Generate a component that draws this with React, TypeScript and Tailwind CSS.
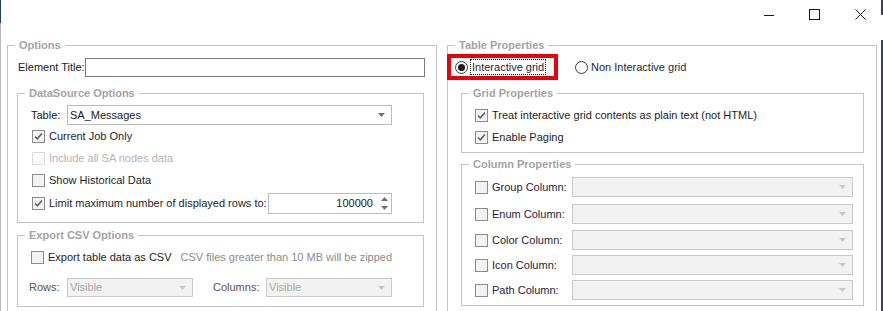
import React from "react";

function Group({
  title,
  className = "",
  children,
}: {
  title: string;
  className?: string;
  children?: React.ReactNode;
}) {
  return (
    <fieldset className={`border border-[#c4c4c4] min-w-0 ${className}`}>
      <legend className="ml-[7px] px-[4px] text-[11px] leading-[14px] font-bold text-[#a4a4a4]">
        {title}
      </legend>
      {children}
    </fieldset>
  );
}

function Check({ checked = false, disabled = false }: { checked?: boolean; disabled?: boolean }) {
  return (
    <span
      className={`w-[13px] h-[13px] border flex items-center justify-center shrink-0 ${
        disabled ? "border-[#dcdcdc] bg-[#fafafa]" : "border-[#8c8c8c] bg-[#f3f3f3]"
      }`}
    >
      {checked && (
        <svg width="11" height="11" viewBox="0 0 11 11">
          <path d="M2 5.5 L4.3 7.8 L9 2.5" fill="none" stroke="#606060" strokeWidth="1.6" />
        </svg>
      )}
    </span>
  );
}

function Arrow({ disabled = false }: { disabled?: boolean }) {
  return (
    <svg width="7" height="4" viewBox="0 0 7 4" className="shrink-0">
      <path d="M0 0 H7 L3.5 4 Z" fill={disabled ? "#c8c8c8" : "#707070"} />
    </svg>
  );
}

function Select({
  value = "",
  disabled = false,
  className = "",
}: {
  value?: string;
  disabled?: boolean;
  className?: string;
}) {
  return (
    <div
      className={`flex items-center border pl-[2px] pr-[6px] shrink-0 ${
        disabled ? "border-[#c9c9c9] bg-[#f2f2f2] text-[#a8a8a8]" : "border-[#bcbcbc] bg-white text-[#1a1a1a]"
      } ${className}`}
    >
      <span className="flex-1 truncate">{value}</span>
      <Arrow disabled={disabled} />
    </div>
  );
}

function CheckRow({
  label,
  checked = false,
  disabled = false,
  className = "",
}: {
  label: string;
  checked?: boolean;
  disabled?: boolean;
  className?: string;
}) {
  return (
    <div className={`flex items-center ${className}`}>
      <Check checked={checked} disabled={disabled} />
      <span className={`ml-[4px] ${disabled ? "text-[#b4b4b4]" : "text-[#1e1e1e]"}`}>{label}</span>
    </div>
  );
}

function ColumnRow({ label, className = "" }: { label: string; className?: string }) {
  return (
    <div className={`flex items-center h-[20px] ${className}`}>
      <Check />
      <span className="ml-[4px] w-[80px] text-[#1f2336]">{label}</span>
      <Select disabled className="w-[281px] h-[20px]" />
    </div>
  );
}

export default function App() {
  return (
    <div className="w-[883px] h-[311px] bg-white overflow-hidden flex whitespace-nowrap font-['Liberation_Sans',Arial,sans-serif] text-[11px] leading-[13px]">
      {/* left window edge */}
      <div className="w-[1px] flex flex-col shrink-0">
        <div className="h-[23px] bg-[#1f3d60]" />
        <div className="flex-1 bg-[#b8b8b8]" />
      </div>

      <div className="flex-1 flex flex-col min-w-0">
        {/* title bar */}
        <div className="h-[29px] flex items-center justify-end gap-[35px] pr-[15px] shrink-0">
          <svg width="10" height="10" viewBox="0 0 10 10">
            <path d="M0 5.5 H10" stroke="#1a1a1a" strokeWidth="1" />
          </svg>
          <svg width="11" height="11" viewBox="0 0 11 11">
            <rect x="0.5" y="0.5" width="10" height="10" fill="none" stroke="#1a1a1a" strokeWidth="1" />
          </svg>
          <svg width="11" height="11" viewBox="0 0 11 11">
            <path d="M0.5 0.5 L10.5 10.5 M10.5 0.5 L0.5 10.5" stroke="#1a1a1a" strokeWidth="1" />
          </svg>
        </div>

        {/* content */}
        <div className="flex gap-[10px] pl-[6px] pt-[9px]">
          {/* Left column */}
          <Group title="Options" className="w-[430px] h-[290px] shrink-0">
            <div className="pl-[9px] pr-[12px]">
              <div className="flex items-center mt-[6px] -mr-[1px]">
                <span className="text-[#1a1a1a] pl-[1px]">Element Title:</span>
                <div className="flex-1 h-[19px] border border-[#7a7a7a] bg-white" />
              </div>

              <Group title="DataSource Options" className="mt-[9px]">
                <div className="pl-[13px] pr-[31px] pb-[7px]">
                  <div className="flex items-center mt-[5px]">
                    <span className="w-[36px] text-[#1a1a1a]">Table:</span>
                    <Select value="SA_Messages" className="w-[325px] h-[20px]" />
                  </div>
                  <CheckRow label="Current Job Only" checked className="h-[22px] pl-[1px]" />
                  <CheckRow label="Include all SA nodes data" disabled className="h-[22px] pl-[1px]" />
                  <CheckRow label="Show Historical Data" className="h-[22px] pl-[1px]" />
                  <div className="flex items-center h-[24px] pl-[1px]">
                    <Check checked />
                    <span className="ml-[4px] text-[#1e1e1e] flex-1">Limit maximum number of displayed rows to:</span>
                    <div className="w-[124px] h-[21px] border border-[#bcbcbc] bg-white flex items-center justify-end pr-[3px] shrink-0">
                      <span className="text-[#1a1a1a] mr-[8px]">100000</span>
                      <div className="flex flex-col gap-[5px]">
                        <svg width="7" height="4" viewBox="0 0 7 4">
                          <path d="M0 4 H7 L3.5 0 Z" fill="#707070" />
                        </svg>
                        <svg width="7" height="4" viewBox="0 0 7 4">
                          <path d="M0 0 H7 L3.5 4 Z" fill="#707070" />
                        </svg>
                      </div>
                    </div>
                  </div>
                </div>
              </Group>

              <Group title="Export CSV Options" className="mt-[5px]">
                <div className="pl-[11px] pb-[9px]">
                  <div className="flex items-center h-[22px] mt-[4px] pl-[2px]">
                    <Check />
                    <span className="ml-[4px] text-[#1e1e1e]">Export table data as CSV</span>
                    <span className="ml-[9px] text-[#8c8c8c]">CSV files greater than 10 MB will be zipped</span>
                  </div>
                  <div className="flex items-center mt-[10px]">
                    <span className="w-[38px] text-[#555555]">Rows:</span>
                    <Select value="Visible" disabled className="w-[126px] h-[19px]" />
                    <span className="ml-[20px] w-[53px] text-[#555555]">Columns:</span>
                    <Select value="Visible" disabled className="w-[126px] h-[19px]" />
                  </div>
                </div>
              </Group>
            </div>
          </Group>

          {/* Right column */}
          <Group title="Table Properties" className="w-[430px] h-[290px] shrink-0">
            <div className="pr-[12px]">
              <div className="flex items-center mt-[2px]">
                <div className="-ml-[1px] w-[111px] h-[26px] border-[4px] border-[#e8000b] flex items-center pl-[4px] shrink-0">
                  <span className="w-[13px] h-[13px] rounded-full border border-[#3a3a3a] bg-white flex items-center justify-center shrink-0">
                    <span className="w-[7px] h-[7px] rounded-full bg-[#1a1a1a]" />
                  </span>
                  <span className="ml-[2px] px-[1px] border border-dotted border-[#222] text-[#1c1f3a] leading-[14px]">
                    Interactive grid
                  </span>
                </div>
                <div className="flex items-center ml-[17px]">
                  <span className="w-[13px] h-[13px] rounded-full border border-[#3a3a3a] bg-white shrink-0" />
                  <span className="ml-[3px] text-[#1c1f3a]">Non Interactive grid</span>
                </div>
              </div>

              <Group title="Grid Properties" className="ml-[13px] mt-[6px]">
                <div className="pl-[13px] pb-[4px] pt-[4px]">
                  <CheckRow label="Treat interactive grid contents as plain text (not HTML)" checked className="h-[22px]" />
                  <CheckRow label="Enable Paging" checked className="h-[22px]" />
                </div>
              </Group>

              <Group title="Column Properties" className="ml-[13px] mt-[4px]">
                <div className="pl-[13px] pb-[5px]">
                  <ColumnRow label="Group Column:" className="mt-[6px]" />
                  <ColumnRow label="Enum Column:" className="mt-[7px]" />
                  <ColumnRow label="Color Column:" className="mt-[6px]" />
                  <ColumnRow label="Icon Column:" className="mt-[5px]" />
                  <ColumnRow label="Path Column:" className="mt-[5px]" />
                </div>
              </Group>
            </div>
          </Group>
        </div>
      </div>

      {/* right window edge */}
      <div className="w-[2px] flex flex-col shrink-0">
        <div className="h-[15px] bg-[#3c4450]" />
        <div className="h-[25px] bg-white" />
        <div className="flex-1 bg-[#3c4450]" />
      </div>
    </div>
  );
}
